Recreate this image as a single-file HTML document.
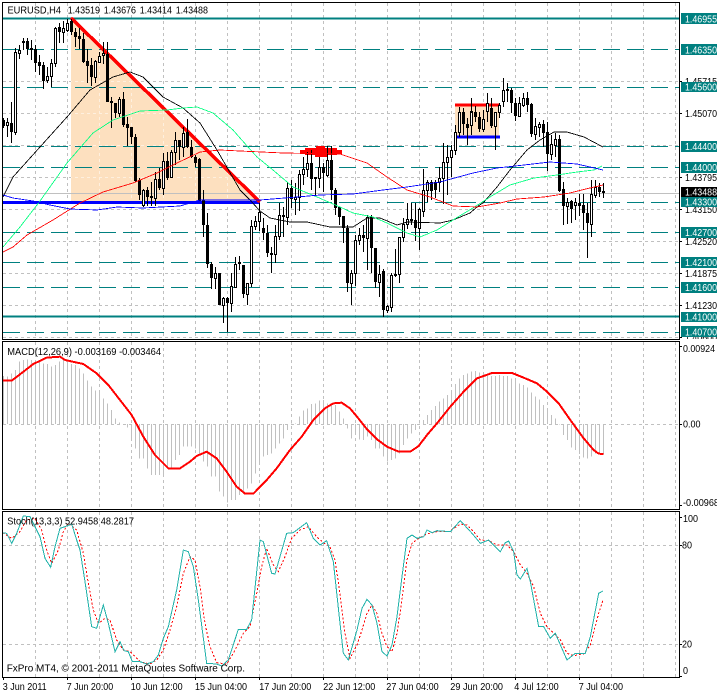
<!DOCTYPE html>
<html><head><meta charset="utf-8"><style>
html,body{margin:0;padding:0;background:#fff;width:717px;height:694px;overflow:hidden}
svg{display:block}
text{font-family:"Liberation Sans",sans-serif;font-size:10px;fill:#000}
.w{fill:#fff}
</style></head><body>
<svg width="717" height="694" viewBox="0 0 717 694" xmlns="http://www.w3.org/2000/svg">
<defs><clipPath id="mc"><rect x="0" y="0" width="717" height="339"/></clipPath>
<clipPath id="tc"><polygon points="71,18 71,202 260,202"/></clipPath></defs>
<rect width="717" height="694" fill="#fff"/>
<g shape-rendering="crispEdges" fill="none">
<!-- main grid -->
<path stroke="#c0c0c0" stroke-dasharray="3 3" d="M35.5 3V339M67.5 3V339M99.5 3V339M131.5 3V339M163.5 3V339M195.5 3V339M227.5 3V339M259.5 3V339M291.5 3V339M323.5 3V339M355.5 3V339M387.5 3V339M419.5 3V339M451.5 3V339M483.5 3V339M515.5 3V339M547.5 3V339M579.5 3V339M611.5 3V339M643.5 3V339M675.5 3V339M3 81.5H680M3 113.5H680M3 145.5H680M3 177.5H680M3 209.5H680M3 241.5H680M3 273.5H680M3 305.5H680M3 337.5H680"/>
<!-- peach objects -->
<polygon points="71,18 71,202 260,202" fill="#fde0bf"/>
<rect x="455" y="105" width="44" height="32" fill="#fde0bf"/>
<path clip-path="url(#tc)" stroke="#fff" stroke-opacity=".5" stroke-dasharray="3 3" d="M99.5 3V339M131.5 3V339M163.5 3V339M195.5 3V339M227.5 3V339M3 81.5H680M3 113.5H680M3 145.5H680M3 177.5H680"/>
<!-- current price -->
<path stroke="#c0c0c0" d="M3 193.5H680"/>
<!-- teal levels -->
<path stroke="#008080" stroke-width="2" d="M3 18.5H680M3 316.5H680"/>
<path stroke="#008080" stroke-dasharray="17 7" d="M3 49.5H680M3 87.5H680M3 146.5H680M3 167.5H680M3 202.5H680M3 232.5H680M3 262.5H680M3 287.5H680M3 332.5H680"/>
<!-- trend objects -->
<path stroke="#0000ff" stroke-width="3" d="M3 202.5H260M457 137H500"/>
<path stroke="#ff0000" stroke-width="3" d="M455 105H500"/>
<path stroke="#ff0000" stroke-width="3.5" d="M71 18L260 202"/>
<polygon fill="#ff0000" points="316,146 325,146 325,148 337,148 337,150 342,150 342,154 337,154 337,155 328,155 328,157 315,157 315,155 305,155 305,154 300,154 300,150 305,150 305,148 316,148"/>
<!-- candles -->
<path stroke="#000" d="M3.5 118V128M7.5 118V137M11.5 102V143M15.5 48V135M19.5 45V59M23.5 38V50M27.5 38V55M31.5 40V60M35.5 45V72M39.5 55V75M43.5 62V89M47.5 67V83M51.5 59V87M55.5 27V67M59.5 23V43M63.5 21V43M67.5 19V32M71.5 19V35M75.5 28V47M79.5 28V49M83.5 33V63M87.5 49V83M91.5 58V86M95.5 60V83M99.5 52V63M103.5 42V64M107.5 42V102M111.5 97V128M115.5 103V118M119.5 97V117M123.5 92V127M127.5 117V146M131.5 127V144M135.5 134V182M139.5 178V200M143.5 189V207M147.5 187V206M151.5 182V206M155.5 172V206M159.5 168V190M163.5 153V195M167.5 152V180M171.5 150V178M175.5 132V165M179.5 140V160M183.5 127V157M187.5 119V148M191.5 140V158M195.5 155V167M199.5 158V201M203.5 190V237M207.5 213V268M211.5 262V289M215.5 267V289M219.5 273V305M223.5 297V323M227.5 297V332M231.5 273V312M235.5 257V288M239.5 256V270M243.5 265V298M247.5 283V305M251.5 220V287M255.5 216V230M259.5 203V231M263.5 218V240M267.5 225V257M271.5 247V273M275.5 225V263M279.5 203V240M283.5 207V237M287.5 182V225M291.5 180V208M295.5 183V215M299.5 170V211M303.5 157V185M307.5 152V177M311.5 150V190M315.5 177V195M319.5 157V188M323.5 163V192M327.5 146V177M331.5 146V200M335.5 188V215M339.5 207V225M343.5 216V243M347.5 225V292M351.5 270V305M355.5 235V286M359.5 228V245M363.5 225V252M367.5 215V270M371.5 215V273M375.5 248V288M379.5 265V297M383.5 269V317M387.5 305V313M391.5 273V312M395.5 249V277M399.5 237V283M403.5 218V242M407.5 203V229M411.5 203V225M415.5 203V241M419.5 208V250M423.5 169V217M427.5 180V202M431.5 180V200M435.5 180V198M439.5 167V192M443.5 143V204M447.5 145V195M451.5 145V177M455.5 125V155M459.5 107V137M463.5 108V135M467.5 118V145M471.5 98V135M475.5 106V122M479.5 112V132M483.5 110V132M487.5 93V122M491.5 98V128M495.5 112V150M499.5 103V118M503.5 78V107M507.5 83V102M511.5 88V113M515.5 98V121M519.5 97V117M523.5 93V107M527.5 92V112M531.5 103V137M535.5 118V140M539.5 122V137M543.5 120V147M547.5 122V171M551.5 135V160M555.5 133V157M559.5 135V192M563.5 182V225M567.5 198V224M571.5 200V223M575.5 198V220M579.5 194V216M583.5 194V230M587.5 203V258M591.5 180V237M595.5 180V198M599.5 183V197M603.5 183V198"/>
<path stroke="#000" stroke-width="3" d="M3.5 120V126M11.5 123V132M23.5 41V43M27.5 41V49M31.5 48V50M35.5 49V63M39.5 62V66M43.5 65V81M59.5 27V32M71.5 21V32M75.5 32V37M79.5 36V39M83.5 39V62M87.5 61V66M91.5 65V77M107.5 54V102M111.5 101V103M115.5 103V113M123.5 99V125M127.5 124V128M131.5 127V137M135.5 137V181M139.5 180V195M147.5 190V197M151.5 196V198M159.5 179V188M167.5 161V178M179.5 140V147M187.5 132V147M191.5 147V157M195.5 157V163M199.5 159V201M203.5 200V225M207.5 225V264M211.5 264V278M219.5 273V305M227.5 298V303M239.5 262V264M243.5 265V294M263.5 228V233M267.5 233V253M271.5 253V255M283.5 215V217M291.5 188V199M311.5 163V179M315.5 177V179M323.5 167V173M331.5 160V190M335.5 190V208M339.5 207V217M343.5 216V228M347.5 228V283M363.5 235V238M371.5 217V248M375.5 248V282M383.5 271V310M395.5 274V276M411.5 219V221M415.5 220V228M431.5 182V191M435.5 182V190M463.5 112V124M467.5 124V128M471.5 111V112M475.5 112V117M479.5 117V129M491.5 108V126M507.5 89V91M511.5 90V103M515.5 103V116M527.5 98V105M531.5 104V134M543.5 124V133M547.5 132V154M559.5 139V191M563.5 189V206M571.5 201V209M579.5 203V206M583.5 205V213M587.5 213V223M599.5 187V192M603.5 191V193"/>
<path stroke="#000" fill="#fff" d="M6.5 122.5h2V125.5h-2zM14.5 52.5h2V132.5h-2zM18.5 50.5h2V53.5h-2zM46.5 76.5h2V80.5h-2zM50.5 63.5h2V76.5h-2zM54.5 28.5h2V63.5h-2zM62.5 28.5h2V32.5h-2zM66.5 23.5h2V30.5h-2zM94.5 61.5h2V77.5h-2zM98.5 56.5h2V62.5h-2zM102.5 53.5h2V55.5h-2zM118.5 99.5h2V113.5h-2zM142.5 190.5h2V205.5h-2zM154.5 179.5h2V198.5h-2zM162.5 161.5h2V188.5h-2zM170.5 152.5h2V177.5h-2zM174.5 140.5h2V152.5h-2zM182.5 133.5h2V147.5h-2zM214.5 273.5h2V278.5h-2zM222.5 298.5h2V305.5h-2zM230.5 286.5h2V303.5h-2zM234.5 264.5h2V287.5h-2zM246.5 283.5h2V294.5h-2zM250.5 226.5h2V283.5h-2zM254.5 221.5h2V226.5h-2zM258.5 212.5h2V221.5h-2zM274.5 236.5h2V254.5h-2zM278.5 215.5h2V236.5h-2zM286.5 188.5h2V217.5h-2zM294.5 197.5h2V199.5h-2zM298.5 174.5h2V197.5h-2zM302.5 169.5h2V174.5h-2zM306.5 163.5h2V169.5h-2zM318.5 167.5h2V178.5h-2zM326.5 160.5h2V175.5h-2zM350.5 273.5h2V283.5h-2zM354.5 240.5h2V273.5h-2zM358.5 235.5h2V240.5h-2zM366.5 217.5h2V238.5h-2zM378.5 274.5h2V282.5h-2zM386.5 306.5h2V310.5h-2zM390.5 275.5h2V307.5h-2zM398.5 237.5h2V274.5h-2zM402.5 224.5h2V237.5h-2zM406.5 219.5h2V224.5h-2zM418.5 209.5h2V228.5h-2zM422.5 190.5h2V211.5h-2zM426.5 182.5h2V190.5h-2zM438.5 178.5h2V182.5h-2zM442.5 162.5h2V178.5h-2zM446.5 157.5h2V162.5h-2zM450.5 150.5h2V157.5h-2zM454.5 132.5h2V150.5h-2zM458.5 112.5h2V132.5h-2zM470.5 112.5h2V125.5h-2zM482.5 119.5h2V129.5h-2zM486.5 103.5h2V111.5h-2zM494.5 112.5h2V126.5h-2zM498.5 105.5h2V112.5h-2zM502.5 90.5h2V101.5h-2zM518.5 103.5h2V116.5h-2zM522.5 98.5h2V105.5h-2zM534.5 126.5h2V134.5h-2zM538.5 124.5h2V127.5h-2zM550.5 144.5h2V154.5h-2zM554.5 139.5h2V145.5h-2zM566.5 202.5h2V206.5h-2zM574.5 202.5h2V205.5h-2zM590.5 194.5h2V224.5h-2zM594.5 187.5h2V195.5h-2z"/>
<!-- moving averages -->
<polyline stroke="#000" stroke-width=".85" points="3,197 13,177 40,147 67,117 90,90 113,77 130,72 143,77 163,97 183,108 200,123 217,150 240,190 250,200 260,211 270,218 290,222 307,222 330,227 340,227 353,227 367,218 380,218 397,225 407,222 440,223 453,220 470,213 477,207 484,202 497,187 510,170 527,150 540,140 554,132 567,132 584,137 603,147"/>
<polyline stroke="#00ff7f" stroke-width=".85" points="3,247 20,227 40,201 67,163 93,133 113,120 140,111 167,110 183,108 197,107 213,113 233,130 240,138 257,157 273,170 293,187 317,197 340,207 353,213 373,217 387,223 407,233 420,237 437,230 453,220 473,208 490,197 510,185 534,178 557,175 577,172 594,170 602,166"/>
<polyline stroke="#ff0000" stroke-width=".85" points="3,252 13,247 27,235 53,220 80,203 103,192 133,183 157,173 177,163 200,152 220,150 240,151 283,153 340,154 367,163 387,177 407,190 430,197 453,206 477,207 500,203 517,199 544,197 570,193 590,188 603,185"/>
<polyline stroke="#0000ff" stroke-width=".85" points="3,195 13,198 33,201 50,205 70,209 97,210 117,207 143,208 180,206 200,200 260,200 297,197 320,195 353,194 383,190 407,187 440,182 473,173 497,168 524,165 550,162 577,164 603,170"/>
<!-- MACD -->
<path stroke="#c0c0c0" stroke-dasharray="3 3" d="M35.5 342V509M67.5 342V509M99.5 342V509M131.5 342V509M163.5 342V509M195.5 342V509M227.5 342V509M259.5 342V509M291.5 342V509M323.5 342V509M355.5 342V509M387.5 342V509M419.5 342V509M451.5 342V509M483.5 342V509M515.5 342V509M547.5 342V509M579.5 342V509M611.5 342V509M643.5 342V509M675.5 342V509M3 424.5H680"/>
<g transform="translate(.1667 340) scale(.33333)">
<path stroke="#c0c0c0" stroke-width="3" d="M10 252V108M22 252V110M34 252V100M46 252V90M58 252V65M70 252V60M82 252V58M94 252V60M106 252V65M118 252V65M130 252V70M142 252V72M154 252V80M166 252V75M178 252V65M190 252V58M202 252V65M214 252V72M226 252V75M238 252V85M250 252V100M262 252V122M274 252V140M286 252V152M298 252V155M310 252V175M322 252V190M334 252V210M346 252V235M358 252V248M370 252V253M382 252V262M394 252V295M406 252V325M418 252V355M430 252V355M442 252V385M454 252V405M466 252V405M478 252V405M490 252V405M502 252V385M514 252V385M526 252V360M538 252V345M550 252V320M562 252V320M574 252V320M586 252V325M598 252V345M610 252V365M622 252V380M634 252V410M646 252V410M658 252V455M670 252V470M682 252V488M694 252V480M706 252V480M718 252V465M730 252V455M742 252V445M754 252V430M766 252V400M778 252V370M790 252V350M802 252V345M814 252V340M826 252V325M838 252V310M850 252V295M862 252V270M874 252V250M886 252V250M898 252V230M910 252V212M922 252V205M934 252V192M946 252V190M958 252V182M970 252V180M982 252V190M994 252V192M1006 252V195M1018 252V215M1030 252V235M1042 252V265M1054 252V295M1066 252V280M1078 252V298M1090 252V300M1102 252V290M1114 252V300M1126 252V325M1138 252V325M1150 252V350M1162 252V365M1174 252V360M1186 252V355M1198 252V340M1210 252V315M1222 252V295M1234 252V280M1246 252V270M1258 252V250M1270 252V240M1282 252V225M1294 252V210M1306 252V198M1318 252V185M1330 252V175M1342 252V165M1354 252V150M1366 252V132M1378 252V115M1390 252V105M1402 252V100M1414 252V95M1426 252V93M1438 252V98M1450 252V100M1462 252V105M1474 252V108M1486 252V108M1498 252V105M1510 252V108M1522 252V108M1534 252V115M1546 252V120M1558 252V130M1570 252V135M1582 252V142M1594 252V158M1606 252V170M1618 252V178M1630 252V195M1642 252V210M1654 252V225M1666 252V235M1678 252V253M1690 252V285M1702 252V300M1714 252V322M1726 252V330M1738 252V342M1750 252V352M1762 252V355M1774 252V350M1786 252V340M1798 252V340M1810 252V342"/>
</g>
<polyline transform="translate(0 340) scale(.33333)" stroke="#ff0000" stroke-width="6" points="8,122 35,122 60,103 100,72 140,53 180,50 195,60 250,72 290,100 325,135 360,180 395,225 430,290 465,345 505,385 540,385 570,365 590,348 620,335 650,355 680,395 710,440 735,461 760,461 800,420 830,385 870,330 905,290 940,240 975,205 1000,190 1025,188 1050,205 1071,230 1101,268 1131,298 1161,320 1196,335 1231,335 1256,318 1281,285 1311,250 1351,200 1391,155 1431,115 1476,99 1536,99 1571,113 1611,130 1641,155 1676,190 1711,240 1751,295 1781,330 1796,341 1811,342"/>
<!-- Stochastic -->
<path stroke="#c0c0c0" stroke-dasharray="3 3" d="M35.5 512V677M67.5 512V677M99.5 512V677M131.5 512V677M163.5 512V677M195.5 512V677M227.5 512V677M259.5 512V677M291.5 512V677M323.5 512V677M355.5 512V677M387.5 512V677M419.5 512V677M451.5 512V677M483.5 512V677M515.5 512V677M547.5 512V677M579.5 512V677M611.5 512V677M643.5 512V677M675.5 512V677M3 545.5H680M3 644.5H680"/>
<polyline transform="translate(0 510) scale(.33333)" stroke="#ff0000" stroke-width="3" stroke-dasharray="6 6" points="8,68 35,85 60,65 80,30 105,25 125,60 140,120 155,160 175,120 190,65 205,40 230,60 250,130 265,220 280,300 295,340 315,325 330,330 350,390 370,420 390,425 420,455 450,462 470,450 490,420 510,360 530,290 550,190 570,140 585,150 600,230 615,340 630,410 650,458 680,462 700,430 730,370 750,350 770,250 785,170 800,115 820,165 835,185 855,140 875,85 900,60 925,50 950,80 970,98 990,110 1005,150 1020,250 1035,370 1050,445 1071,405 1086,360 1101,310 1116,285 1131,310 1146,370 1161,410 1176,425 1191,370 1206,270 1221,150 1236,100 1256,85 1281,72 1311,65 1346,65 1381,42 1401,45 1421,65 1441,90 1466,92 1491,105 1521,105 1541,125 1561,165 1581,190 1601,230 1621,310 1641,350 1661,370 1681,390 1701,430 1721,437 1751,432 1771,405 1796,310 1809,270"/>
<polyline transform="translate(0 510) scale(.33333)" stroke="#20b2aa" stroke-width="3" points="8,68 20,70 35,100 50,70 70,18 90,20 105,50 120,80 135,145 152,172 165,110 180,55 195,50 215,42 230,90 240,120 255,215 275,350 290,355 310,285 325,340 345,425 360,395 372,422 385,425 397,455 420,455 440,462 460,455 475,435 490,385 505,350 530,240 550,120 565,125 580,170 595,270 620,460 650,462 665,468 685,450 715,358 740,358 755,330 780,90 790,95 815,190 825,192 860,70 880,68 920,38 940,85 960,105 980,92 1000,155 1020,340 1030,430 1045,450 1071,360 1086,295 1101,268 1116,285 1131,340 1146,425 1161,438 1176,405 1191,320 1206,200 1221,85 1236,75 1251,85 1271,80 1281,60 1296,68 1311,62 1351,65 1381,32 1416,70 1441,100 1466,90 1501,125 1516,98 1526,93 1541,125 1551,195 1561,207 1581,175 1591,215 1616,350 1631,350 1651,385 1666,370 1701,450 1726,430 1756,430 1771,380 1796,250 1809,243"/>
<!-- frames -->
<path stroke="#000" d="M2.5 2.5H679.5V339.5H2.5ZM2.5 341.5H679.5V509.5H2.5ZM2.5 511.5H679.5V677.5H2.5Z"/>
<path stroke="#000" d="M679 81.5h3M679 113.5h3M679 177.5h3M679 209.5h3M679 241.5h3M679 273.5h3M679 305.5h3M679 337.5h3M679 346.5h3M679 424.5h3M679 505.5h3M679 517.5h3M679 545.5h3M679 644.5h3M679 676.5h3M3.5 677V680M67.5 677V680M131.5 677V680M195.5 677V680M259.5 677V680M323.5 677V680M387.5 677V680M451.5 677V680M515.5 677V680M579.5 677V680"/>
</g>
<!-- price axis labels -->
<g clip-path="url(#mc)">
<text x="685" y="85" textLength="32" lengthAdjust="spacingAndGlyphs">1.45715</text>
<text x="685" y="117" textLength="32" lengthAdjust="spacingAndGlyphs">1.45070</text>
<text x="685" y="181" textLength="32" lengthAdjust="spacingAndGlyphs">1.43795</text>
<text x="685" y="213" textLength="32" lengthAdjust="spacingAndGlyphs">1.43150</text>
<text x="685" y="245" textLength="32" lengthAdjust="spacingAndGlyphs">1.42520</text>
<text x="685" y="277" textLength="32" lengthAdjust="spacingAndGlyphs">1.41875</text>
<text x="685" y="309" textLength="32" lengthAdjust="spacingAndGlyphs">1.41230</text>
<text x="685" y="341" textLength="32" lengthAdjust="spacingAndGlyphs">1.40600</text>
<rect x="681" y="187" width="36" height="10" fill="#000"/>
<text class="w" x="685" y="195.5" textLength="32" lengthAdjust="spacingAndGlyphs">1.43488</text>
<g fill="#008080">
<rect x="681" y="13" width="36" height="11"/><rect x="681" y="44" width="36" height="11"/><rect x="681" y="82" width="36" height="10"/><rect x="681" y="141" width="36" height="11"/><rect x="681" y="162" width="36" height="11"/><rect x="681" y="197" width="36" height="10"/><rect x="681" y="227" width="36" height="11"/><rect x="681" y="257" width="36" height="11"/><rect x="681" y="282" width="36" height="11"/><rect x="681" y="312" width="36" height="10"/><rect x="681" y="326" width="36" height="11"/>
</g>
<text class="w" x="685" y="22.5" textLength="32" lengthAdjust="spacingAndGlyphs">1.46955</text>
<text class="w" x="685" y="53.5" textLength="32" lengthAdjust="spacingAndGlyphs">1.46350</text>
<text class="w" x="685" y="90.5" textLength="32" lengthAdjust="spacingAndGlyphs">1.45600</text>
<text class="w" x="685" y="150" textLength="32" lengthAdjust="spacingAndGlyphs">1.44400</text>
<text class="w" x="685" y="171" textLength="32" lengthAdjust="spacingAndGlyphs">1.44000</text>
<text class="w" x="685" y="205.5" textLength="32" lengthAdjust="spacingAndGlyphs">1.43300</text>
<text class="w" x="685" y="236" textLength="32" lengthAdjust="spacingAndGlyphs">1.42700</text>
<text class="w" x="685" y="266" textLength="32" lengthAdjust="spacingAndGlyphs">1.42100</text>
<text class="w" x="685" y="291" textLength="32" lengthAdjust="spacingAndGlyphs">1.41600</text>
<text class="w" x="685" y="320.5" textLength="32" lengthAdjust="spacingAndGlyphs">1.41000</text>
<text class="w" x="685" y="335.5" textLength="32" lengthAdjust="spacingAndGlyphs">1.40700</text>
</g>
<!-- indicator axis labels -->
<text x="683" y="352" textLength="32" lengthAdjust="spacingAndGlyphs">0.00924</text>
<text x="683" y="427.5" textLength="17.5" lengthAdjust="spacingAndGlyphs">0.00</text>
<text x="683" y="506" textLength="36" lengthAdjust="spacingAndGlyphs">-0.00968</text>
<text x="683" y="522" textLength="15" lengthAdjust="spacingAndGlyphs">100</text>
<text x="682" y="548.5" textLength="10" lengthAdjust="spacingAndGlyphs">80</text>
<text x="682" y="647.5" textLength="10" lengthAdjust="spacingAndGlyphs">20</text>
<text x="683" y="674" textLength="5" lengthAdjust="spacingAndGlyphs">0</text>
<!-- titles -->
<text x="7.5" y="13.5" textLength="53.5" lengthAdjust="spacingAndGlyphs">EURUSD,H4</text>
<text x="67.7" y="13.5" textLength="32.3" lengthAdjust="spacingAndGlyphs">1.43519</text>
<text x="103.7" y="13.5" textLength="32.3" lengthAdjust="spacingAndGlyphs">1.43676</text>
<text x="139.7" y="13.5" textLength="32.3" lengthAdjust="spacingAndGlyphs">1.43414</text>
<text x="175.7" y="13.5" textLength="32.3" lengthAdjust="spacingAndGlyphs">1.43488</text>
<text x="7.3" y="355" textLength="153.7" lengthAdjust="spacingAndGlyphs">MACD(12,26,9) -0.003169 -0.003464</text>
<text x="7.3" y="524.7" textLength="126.7" lengthAdjust="spacingAndGlyphs">Stoch(13,3,3) 52.9458 48.2817</text>
<text x="6.7" y="671.7" textLength="238.3" lengthAdjust="spacingAndGlyphs">FxPro MT4, © 2001-2011 MetaQuotes Software Corp.</text>
<!-- time axis -->
<text x="2.7" y="690" textLength="44" lengthAdjust="spacingAndGlyphs">3 Jun 2011</text>
<text x="66.7" y="690" textLength="46.5" lengthAdjust="spacingAndGlyphs">7 Jun 20:00</text>
<text x="130.7" y="690" textLength="52" lengthAdjust="spacingAndGlyphs">10 Jun 12:00</text>
<text x="195" y="690" textLength="52" lengthAdjust="spacingAndGlyphs">15 Jun 04:00</text>
<text x="259.3" y="690" textLength="52" lengthAdjust="spacingAndGlyphs">17 Jun 20:00</text>
<text x="323.3" y="690" textLength="52" lengthAdjust="spacingAndGlyphs">22 Jun 12:00</text>
<text x="386.3" y="690" textLength="52.4" lengthAdjust="spacingAndGlyphs">27 Jun 04:00</text>
<text x="450.3" y="690" textLength="52.7" lengthAdjust="spacingAndGlyphs">29 Jun 20:00</text>
<text x="514.3" y="690" textLength="44.4" lengthAdjust="spacingAndGlyphs">4 Jul 12:00</text>
<text x="578.7" y="690" textLength="44.3" lengthAdjust="spacingAndGlyphs">7 Jul 04:00</text>
</svg>
</body></html>
